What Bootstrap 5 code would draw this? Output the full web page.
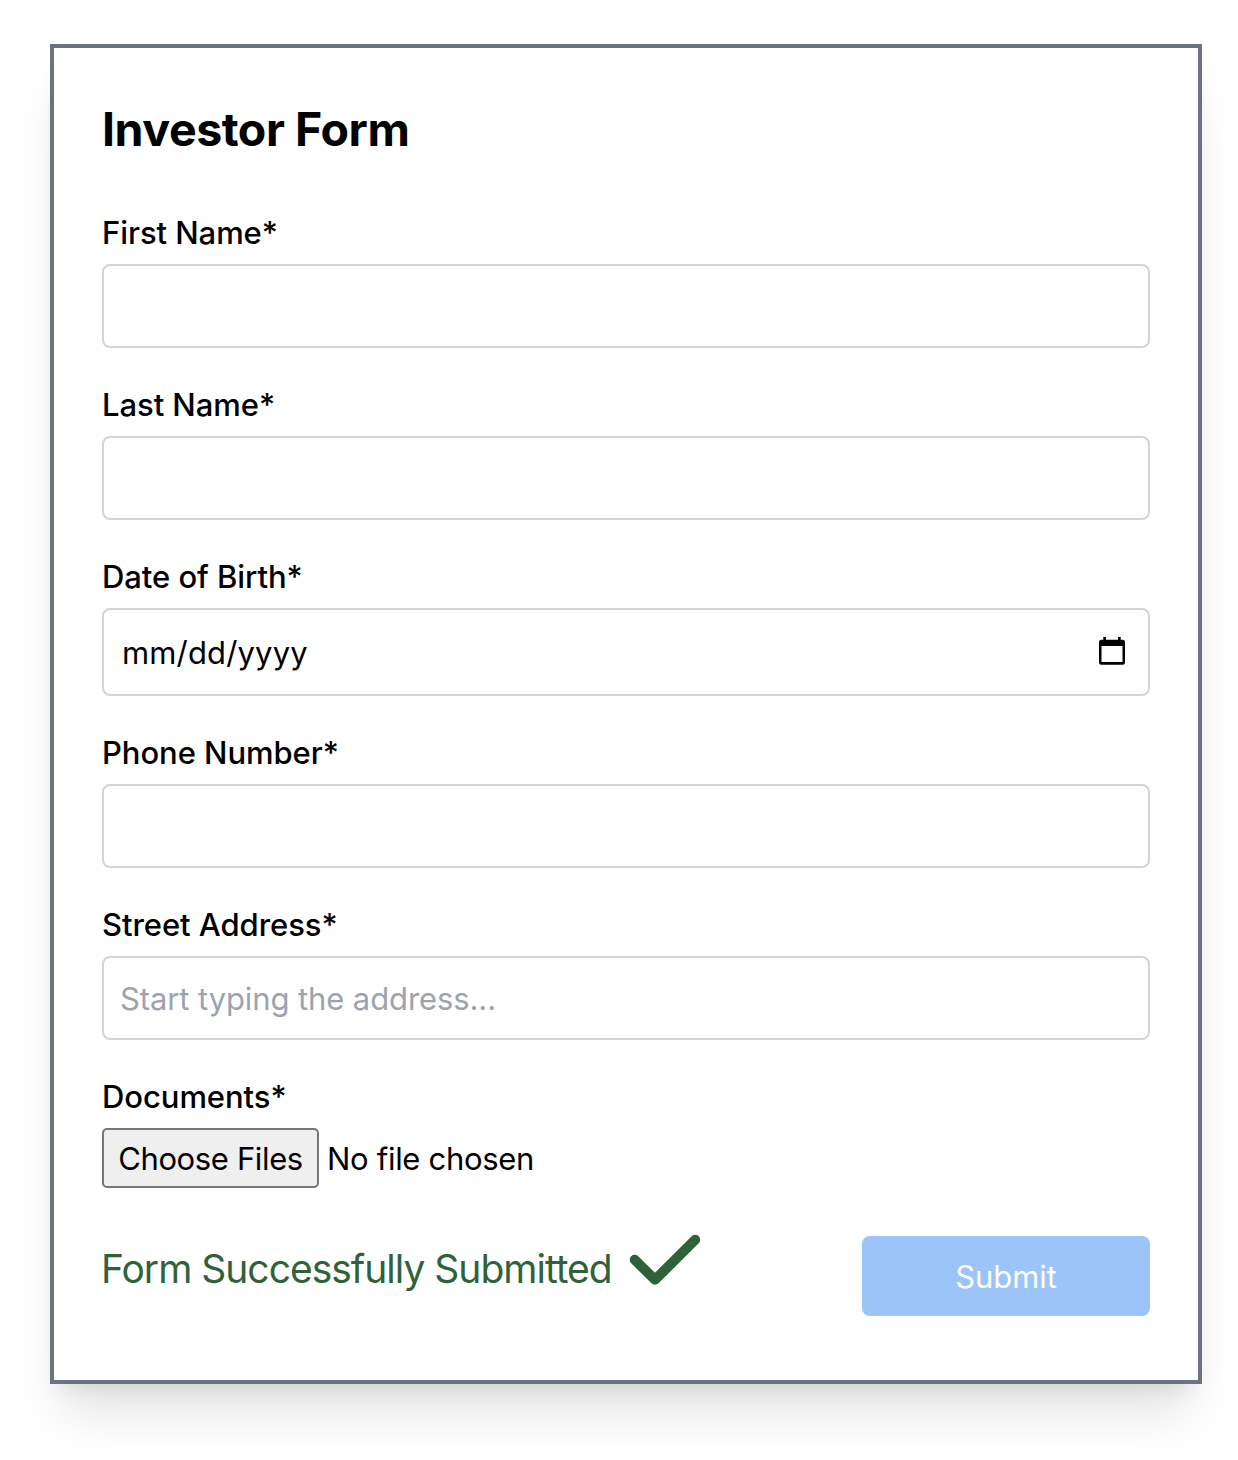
<!DOCTYPE html>
<html lang="en">
<head>
<meta charset="utf-8">
<meta name="viewport" content="width=device-width, initial-scale=1">
<title>Investor Form</title>
<link href="https://cdn.jsdelivr.net/npm/bootstrap@5.3.0/dist/css/bootstrap.min.css" rel="stylesheet">
<style>
  body { min-height: 1460px; padding: 44px 0 0 50px; font-family: Inter, "Liberation Sans", sans-serif; font-size: 31px; line-height: 48px; color: #000; background: #fff; overflow: hidden; }
  .investor-panel { width: 1152px; height: 1340px; padding: 48px; border: 4px solid #6b7280; background: #fff;
    box-shadow: 0 40px 50px -10px rgba(0,0,0,.1), 0 16px 20px -12px rgba(0,0,0,.1); }
  .form-title { font-size: 46.5px; line-height: 64px; font-weight: 700; letter-spacing: -.45px; padding-top: 1px; margin-bottom: 47px; }
  .field { margin-bottom: 32px; }
  .form-label { display: block; font-weight: 500; padding-top: 1px; margin-bottom: 7px; letter-spacing: -.06px; }
  .form-control, .form-control:focus { height: 84px; padding: 16px; font-size: 31px; line-height: 48px; letter-spacing: -.1px; color: #000; border: 2px solid #d1d5db; border-radius: 8px; box-shadow: none; }
  .form-control::placeholder { color: #9ca3af; opacity: 1; }
  .form-control.date-input { height: 88px; padding-left: 18px; letter-spacing: .15px; }
  .date-icon { right: 25px; top: 29px; }
  .file-btn { height: 60px; width: 217px; padding: 2px 0 0; font-size: 31px; line-height: 54px; color: #000; background: #efefef; border: 2px solid #767676; border-radius: 5px; letter-spacing: -.36px; }
  .file-status { margin-left: 8px; padding-top: 2px; letter-spacing: -.3px; }
  .success-note { width: 527px; white-space: nowrap; font-size: 39px; line-height: 56px; color: #2f6238; letter-spacing: -1px; padding-top: 5px; margin-left: -1px; }
  .check-icon { margin: -2px 0 0 1px; }
  .submit-btn, .submit-btn:disabled { width: 288px; height: 80px; padding: 8px 0 6px; font-size: 31px; line-height: 48px; color: #fff; background: #9dc4f8; border: 0; border-radius: 8px; opacity: 1; letter-spacing: -.05px; }
</style>
</head>
<body>
<form class="investor-panel">
  <h1 class="form-title">Investor Form</h1>
  <div class="field"><label class="form-label" for="first">First Name*</label><input id="first" type="text" class="form-control"></div>
  <div class="field"><label class="form-label" for="last">Last Name*</label><input id="last" type="text" class="form-control"></div>
  <div class="field"><label class="form-label" for="dob">Date of Birth*</label>
    <div class="position-relative"><input id="dob" type="text" class="form-control date-input" value="mm/dd/yyyy">
      <svg class="date-icon position-absolute" width="26" height="28" viewBox="0 0 26 28"><path fill="#000" fill-rule="evenodd" d="M4.300 0h2.700v2.700h12V0h2.700v2.700h1.800A2.500 2.500 0 0 1 26 5.200v20a2.500 2.500 0 0 1-2.500 2.500h-21A2.500 2.500 0 0 1 0 25.200v-20a2.500 2.500 0 0 1 2.500-2.500h1.800zM2.500 9v16h21V9z"/></svg></div></div>
  <div class="field"><label class="form-label" for="phone">Phone Number*</label><input id="phone" type="text" class="form-control"></div>
  <div class="field"><label class="form-label" for="street">Street Address*</label><input id="street" type="text" class="form-control" placeholder="Start typing the address..."></div>
  <div><label class="form-label">Documents*</label>
    <div class="d-flex align-items-center"><button type="button" class="file-btn">Choose Files</button><span class="file-status">No file chosen</span></div></div>
  <div class="d-flex justify-content-between align-items-start mt-5">
    <div class="d-flex align-items-start"><span class="success-note">Form Successfully Submitted</span>
      <svg class="check-icon" width="72" height="52" viewBox="0 0 72 52"><path d="M5.700 25.700 26 45.800 66.200 5.700" fill="none" stroke="#2f6238" stroke-width="10" stroke-linecap="round" stroke-linejoin="round"/></svg></div>
    <button type="submit" class="btn submit-btn" disabled>Submit</button>
  </div>
</form>
<script src="https://cdn.jsdelivr.net/npm/bootstrap@5.3.0/dist/js/bootstrap.bundle.min.js"></script>
</body>
</html>
